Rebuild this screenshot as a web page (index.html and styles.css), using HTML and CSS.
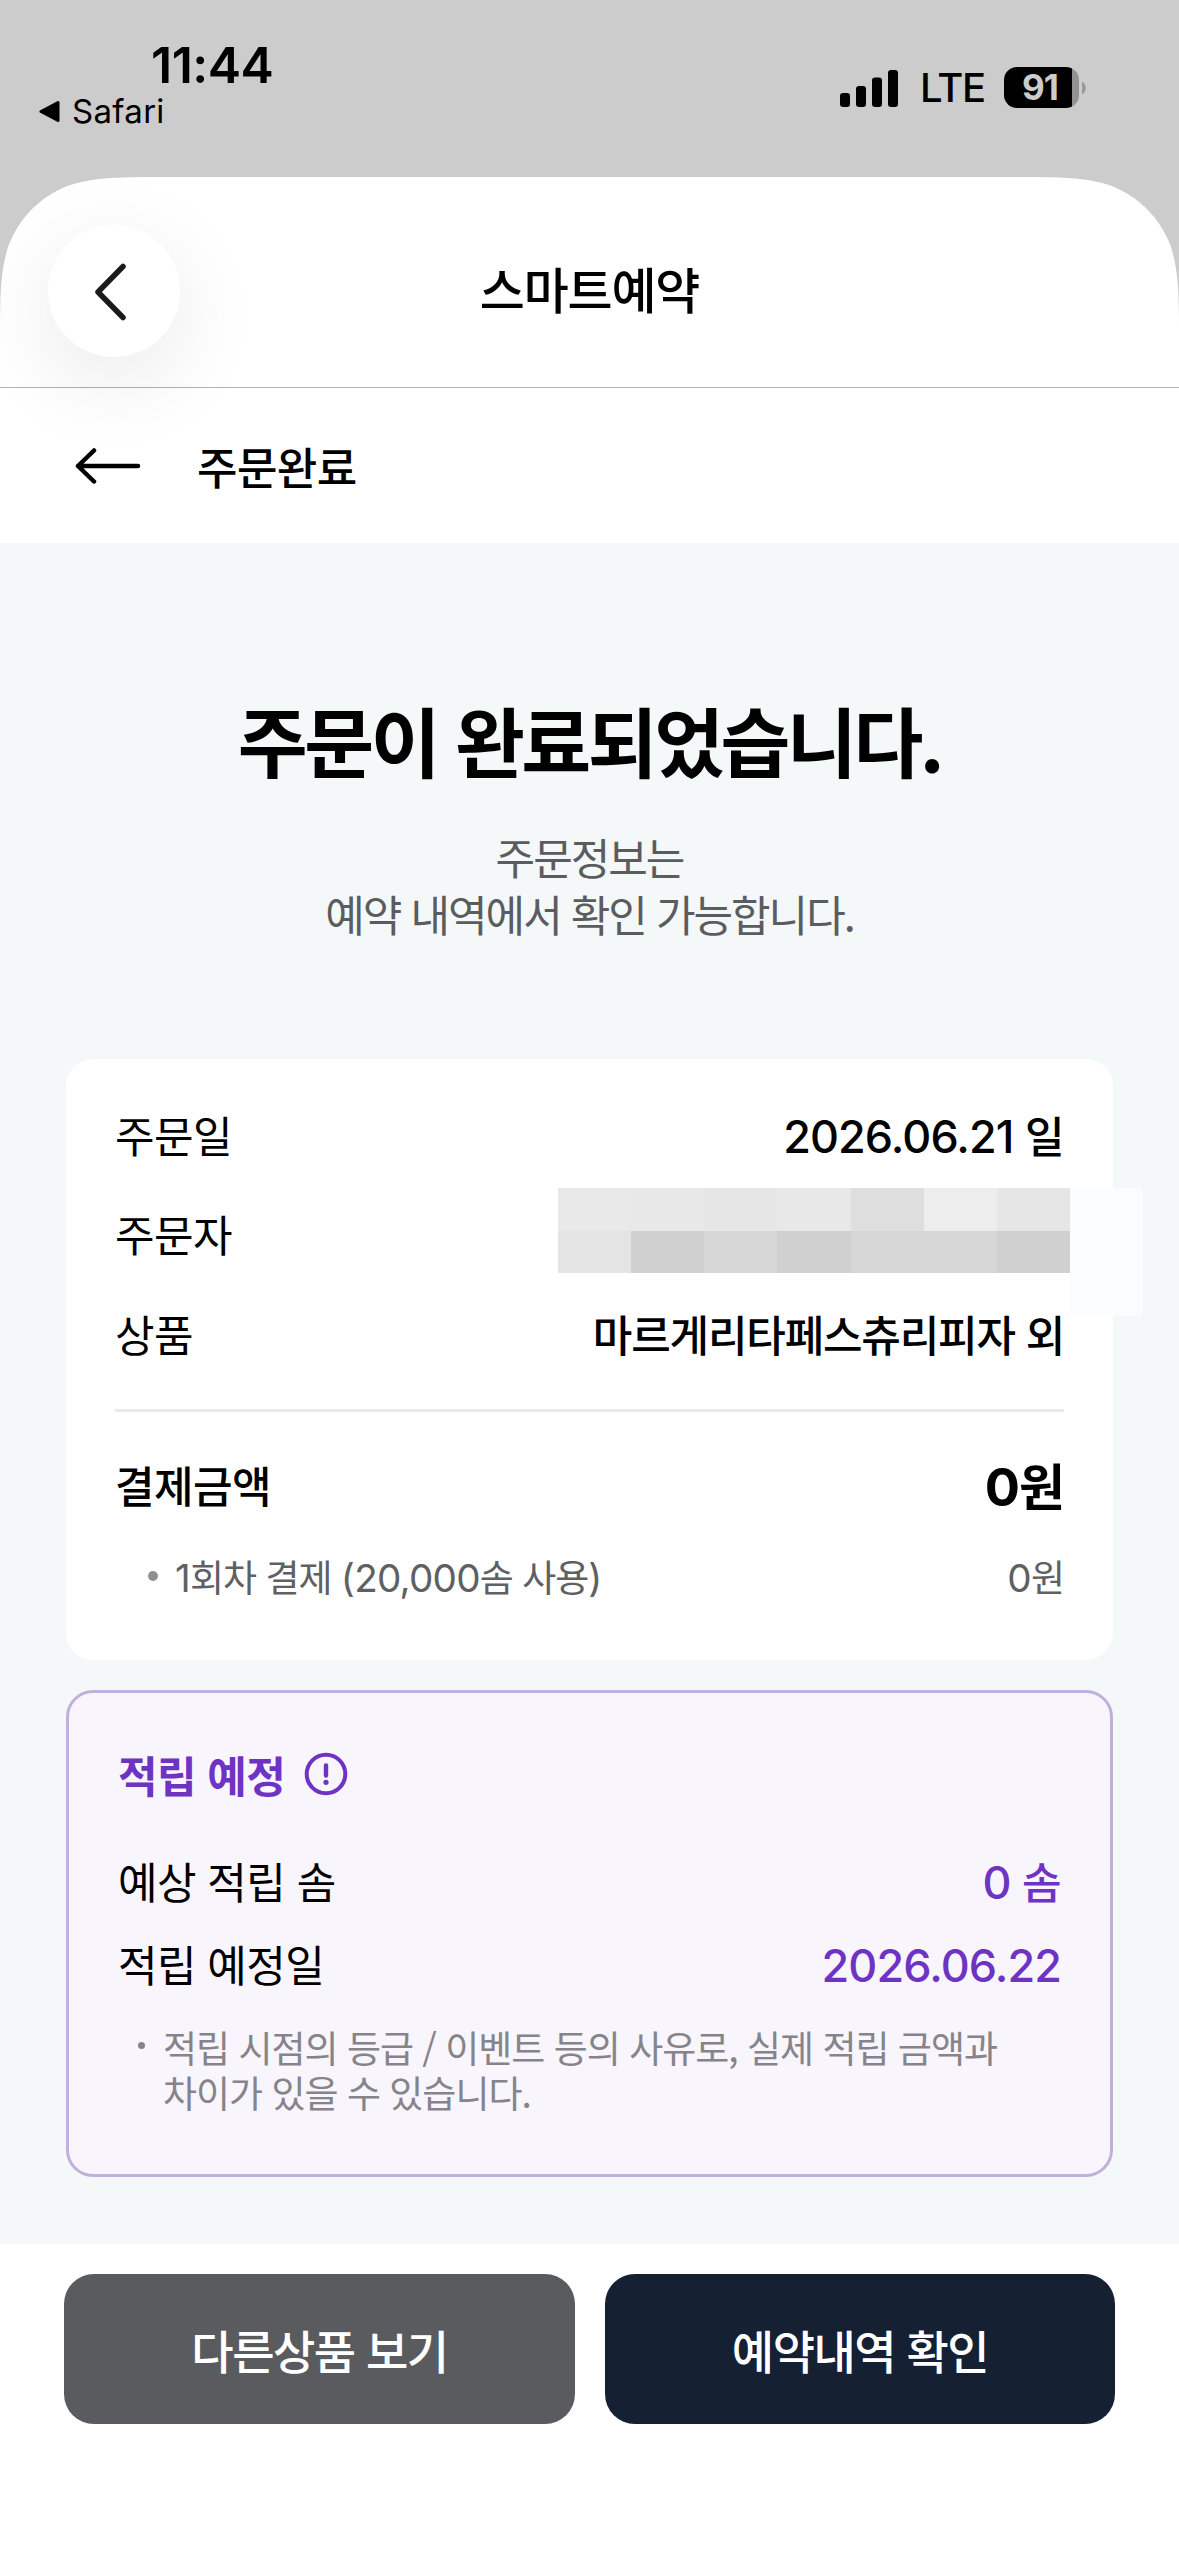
FILE: index.html
```html
<!DOCTYPE html>
<html lang="ko">
<head>
<meta charset="utf-8">
<title>스마트예약</title>
<link rel="stylesheet" href="styles.css">
</head>
<body>
<div class="status">
  <div class="status-left">
    <div class="clock">11:44</div>
    <div class="return-app">
      <svg width="21" height="23" viewBox="0 0 21 23"><path d="M2 11.5 19 2.5V20.500Z" stroke="#000" stroke-width="3" stroke-linejoin="round"/></svg>
      <span>Safari</span>
    </div>
  </div>
  <div class="status-right">
    <svg width="58" height="38" viewBox="0 0 58 38"><rect y="24" width="10" height="14" rx="3"/><rect x="16" y="17" width="10" height="21" rx="3"/><rect x="32" y="8.500" width="10" height="29.500" rx="3"/><rect x="48" y="1" width="10" height="37" rx="3"/></svg>
    <span class="network">LTE</span>
    <div class="battery"><span class="battery-level">91</span></div>
    <svg class="battery-nub" width="4" height="14" viewBox="0 0 4 14"><path d="M0 0.500C5 3 5 11 0 13.500Z" fill="#9b9b9b"/></svg>
  </div>
</div>

<div class="sheet">
  <header class="app-bar">
    <button class="back" aria-label="뒤로"><svg width="34" height="60" viewBox="0 0 34 60"><path d="M30 4.500 5 30 30 55.500" fill="none" stroke="#1b1b1c" stroke-width="5.500" stroke-linecap="round" stroke-linejoin="round"/></svg></button>
    <h1 class="app-title">스마트예약</h1>
  </header>
  <nav class="page-bar">
    <svg width="66" height="40" viewBox="0 0 66 40"><path d="M63 20H3M19 4.500 3 20 19 35.500" fill="none" stroke="#000" stroke-width="4.500" stroke-linecap="round" stroke-linejoin="round"/></svg>
    <h2 class="page-title">주문완료</h2>
  </nav>

  <main class="content">
    <section class="hero">
      <p class="hero-title">주문이 완료되었습니다.</p>
      <p class="hero-text">주문정보는<br>예약 내역에서 확인 가능합니다.</p>
    </section>

    <section class="card order">
      <div class="row order-row"><span>주문일</span><span class="value order-date"><span class="num">2026.06.21</span> 일</span></div>
      <div class="row order-row orderer"><span>주문자</span>
        <div class="mosaic">
          <i class="g1"></i><i class="g2"></i><i class="g3"></i><i class="g2"></i><i class="g5"></i><i class="g0"></i><i class="g3"></i>
          <i class="g4"></i><i class="g7"></i><i class="g6"></i><i class="g7"></i><i class="g6"></i><i class="g6"></i><i class="g7"></i>
        </div>
        <div class="mosaic-edge"></div>
      </div>
      <div class="row order-row"><span>상품</span><span class="value product">마르게리타페스츄리피자 외</span></div>
      <hr class="rule">
      <div class="row total"><span class="value">결제금액</span><span class="total-value"><span class="num">0</span>원</span></div>
      <div class="row detail"><span class="detail-label"><i class="dot"></i><span><span class="num">1</span>회차 결제 <span class="num">(20,000</span>솜 사용<span class="num">)</span></span></span><span><span class="num">0</span>원</span></div>
    </section>

    <section class="card reward">
      <h3 class="reward-title"><span>적립 예정</span><svg width="44" height="44" viewBox="0 0 44 44"><circle cx="22" cy="22" r="19.300" fill="none" stroke="#6f33c4" stroke-width="4"/><path d="M22 13.500V23.500" stroke="#6f33c4" stroke-width="4.400" stroke-linecap="round"/><circle cx="22" cy="30.300" r="2.600" fill="#6f33c4"/></svg></h3>
      <div class="row reward-row"><span>예상 적립 솜</span><span class="reward-value"><span class="num">0</span> 솜</span></div>
      <div class="row reward-row"><span>적립 예정일</span><span class="reward-value"><span class="num">2026.06.22</span></span></div>
      <div class="note"><i class="dot small"></i><p>적립 시점의 등급 / 이벤트 등의 사유로, 실제 적립 금액과<br>차이가 있을 수 있습니다.</p></div>
    </section>
  </main>

  <footer class="actions">
    <button class="action secondary">다른상품 보기</button>
    <button class="action primary">예약내역 확인</button>
  </footer>
</div>
</body>
</html>
```
FILE: styles.css
```css
* { box-sizing: border-box; margin: 0; padding: 0; }

body {
  width: 1179px;
  height: 2556px;
  overflow: hidden;
  background: #ccc;
  color: #000;
  font-family: "Noto Sans CJK KR", "Noto Sans", sans-serif;
}

svg { display: block; flex: none; }
button { border: 0; font: inherit; color: inherit; }
i { display: block; font-style: normal; }

.num {
  font-family: Inter, "Noto Sans CJK KR", sans-serif;
  font-size: 1.045em;
  line-height: 0;
  letter-spacing: -0.02em;
}

/* Status bar */
.status {
  display: flex;
  justify-content: space-between;
  height: 177px;
  padding: 35px 93px 0 39px;
  font-family: Inter, sans-serif;
}
.clock {
  padding-left: 112px;
  font-size: 50px;
  font-weight: 600;
  line-height: 60px;
  letter-spacing: -0.5px;
}
.return-app {
  display: flex;
  align-items: center;
  gap: 12px;
  font-size: 33px;
  line-height: 32px;
  letter-spacing: 0.3px;
}
.status-right { display: flex; align-items: center; height: 105px; }
.network { margin-left: 22px; width: 84px; font-size: 40px; font-weight: 500; letter-spacing: -1.5px; }
.battery {
  width: 75px;
  height: 41px;
  border-radius: 13px;
  background: linear-gradient(90deg, #000 68px, #929292 68px);
  color: #ccc;
  font-size: 35px;
  font-weight: 700;
  line-height: 41px;
  text-align: center;
}
.battery-level { margin-right: 3px; letter-spacing: -1px; }
.battery-nub { margin-left: 3px; }

/* Sheet with continuous corners */
.sheet {
  height: 2379px;
  background: #fff;
  clip-path: path("M0 2379V168C0 120 0 95.500 8.200 69.500C18.600 41 41 18.600 69.500 8.200C95.500 0 120 0 168 0H1011C1059 0 1083.500 0 1109.500 8.200C1138 18.600 1160.400 41 1170.800 69.500C1179 95.500 1179 120 1179 168V2379Z");
}
.app-bar {
  display: grid;
  grid-template-columns: 132px 1fr 132px;
  align-items: center;
  height: 211px;
  padding: 18px 48px 0;
  border-bottom: 1px solid #b0b0b0;
}
.back {
  display: grid;
  place-items: center;
  width: 132px;
  height: 132px;
  padding: 2px 8px 0 0;
  border-radius: 50%;
  background: #fff;
  box-shadow: 0 24px 90px rgba(0, 0, 0, 0.09);
}
.app-title {
  margin-top: -6px;
  font-size: 49px;
  font-weight: 500;
  line-height: 60px;
  letter-spacing: -1.200px;
  text-align: center;
}
.page-bar {
  display: flex;
  align-items: center;
  gap: 56px;
  height: 155px;
  padding-left: 75px;
}
.page-title { font-size: 44px; font-weight: 500; line-height: 60px; letter-spacing: -0.600px; }

/* Order summary */
.content { height: 1701px; padding: 0 66px; background: #f4f8f9; }
.hero { height: 516px; padding-top: 146px; text-align: center; }
.hero-title { font-size: 76px; font-weight: 700; line-height: 100px; letter-spacing: -3.500px; }
.hero-text { margin-top: 39px; color: #5b5c5e; font-size: 43px; line-height: 57px; letter-spacing: -2px; }

.card { width: 1047px; border-radius: 27px; }
.row { display: flex; align-items: center; justify-content: space-between; }
.value { font-weight: 500; }
.order {
  height: 601px;
  padding: 25px 49px 0;
  background: #fff;
  font-size: 43px;
  letter-spacing: -0.600px;
}
.order-row { height: 99.500px; }
.orderer { position: relative; }
.product { letter-spacing: -1.200px; }
.mosaic {
  position: absolute;
  left: 443px;
  top: 4px;
  display: grid;
  grid-template-columns: repeat(7, 1fr);
  grid-template-rows: 43px 42px;
  width: 512px;
}
.mosaic-edge { position: absolute; left: 955px; top: 4px; width: 72px; height: 128px; background: #fafcfe; }
.g0 { background: #ededed; }
.g1 { background: #e9e9e9; }
.g2 { background: #e8e8e8; }
.g3 { background: #e6e6e6; }
.g4 { background: #e4e4e4; }
.g5 { background: #dedede; }
.g6 { background: #d7d7d7; }
.g7 { background: #d0d0d0; }
.rule { margin-top: 26px; height: 3px; border: 0; background: #e9e9e9; }
.total { height: 92px; margin-top: 26px; }
.total-value { font-size: 50px; font-weight: 700; letter-spacing: -1px; }
.detail { height: 92px; color: #5f6062; font-size: 37px; letter-spacing: -1px; }
.detail-label { display: flex; align-items: center; gap: 17px; padding-left: 33px; }
.dot { flex: none; width: 10px; height: 10px; border-radius: 50%; background: #8f8f8f; }

/* Expected reward */
.reward {
  height: 487px;
  margin-top: 30px;
  padding: 50px 49px 0;
  border: 3px solid #c1b0dc;
  background: #f8f5fc;
  font-size: 43px;
  letter-spacing: -0.600px;
}
.reward-title {
  display: flex;
  align-items: center;
  gap: 19px;
  height: 62px;
  margin-bottom: 33px;
  color: #6f33c4;
  font-size: 43px;
  font-weight: 700;
}
.reward-row { height: 83px; }
.reward-value { color: #6f33c4; font-weight: 500; }
.note {
  display: flex;
  gap: 18px;
  margin-top: 21px;
  padding-left: 20px;
  color: #86848a;
  font-size: 37px;
  line-height: 45px;
  letter-spacing: -1px;
}
.small { width: 7px; height: 7px; margin-top: 17px; background: #86848a; }

/* Bottom actions */
.actions { display: grid; grid-template-columns: 511px 510px; gap: 30px; padding: 30px 64px 0; }
.action {
  height: 150px;
  border-radius: 30px;
  color: #fff;
  font-size: 46px;
  font-weight: 500;
  line-height: 60px;
  letter-spacing: -1.500px;
}
.secondary { background: #5a5b5e; }
.primary { background: #162033; }
```
